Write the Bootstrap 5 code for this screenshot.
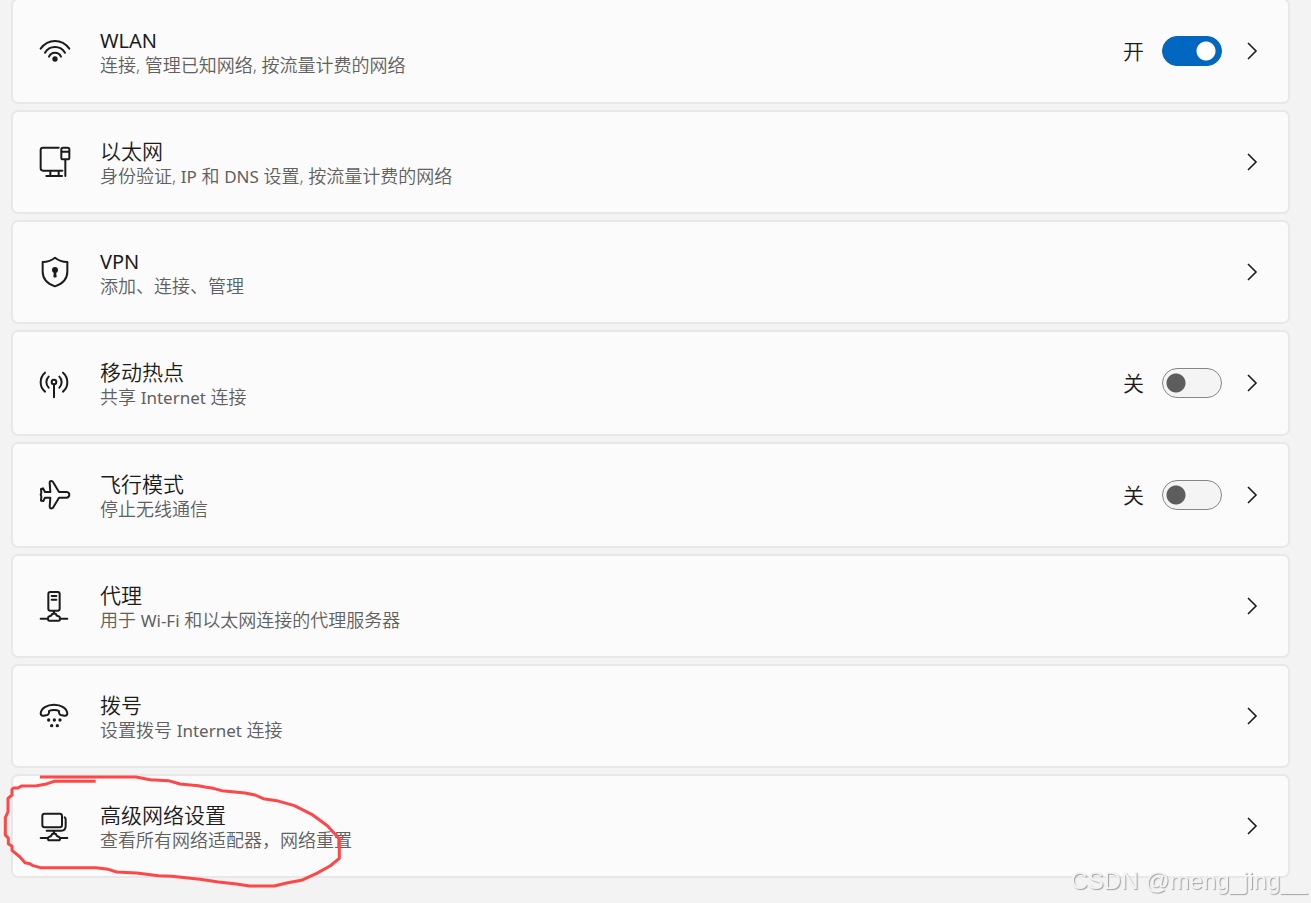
<!DOCTYPE html>
<html lang="zh-CN">
<head>
<meta charset="utf-8">
<meta name="viewport" content="width=device-width, initial-scale=1">
<title>网络和 Internet</title>
<link href="https://cdn.jsdelivr.net/npm/bootstrap@5.3.0/dist/css/bootstrap.min.css" rel="stylesheet">
<style>
  body { background: #f3f3f3; color: #1b1b1b; font-family: "Noto Sans", "Noto Sans CJK SC", sans-serif; font-weight: 350; }
  .settings-list { gap: 6px; margin-top: -2px; padding: 0 21px 24px 11px; }
  .setting { min-height: 104px; padding: 0 30px 0 17px; background: #fbfbfb; border: 2px solid #e8e8e8; border-radius: 7px; }
  .setting.has-switch { min-height: 106px; }
  .glyph { width: 50px; height: 50px; margin-right: 20px; fill: none; stroke: #1b1b1b; stroke-width: 6; stroke-linecap: round; stroke-linejoin: round; }
  .glyph .solid { fill: #1b1b1b; stroke: none; }
  .setting-text { padding-top: 4px; }
  .setting-title { font-size: 21px; line-height: 25px; color: #1b1b1b; }
  .setting-note { font-size: 18px; line-height: 25px; color: #606060; }
  .setting-title span { font-size: 20px; font-weight: 400; }
  .setting-note span { font-size: 17px; font-weight: 400; }
  .switch-group { gap: 18px; z-index: 2; margin-right: 25px; }
  .switch-group label { font-size: 21px; line-height: 30px; }
  .switch-group .form-check-input { width: 60px; height: 30px; margin: 0; border: 1px solid #868686; background-color: #f4f4f4;
    background-image: radial-gradient(circle at 13px 14px, #5d5d5d 9px, transparent 10px); background-size: 100% 100%; background-position: center; }
  .switch-group .form-check-input:checked { border-color: #0067c0; background-color: #0067c0;
    background-image: radial-gradient(circle at 43px 14px, #fff 9px, transparent 10px); background-position: center; }
  .chevron { width: 11px; height: 18px; fill: none; stroke: #1b1b1b; stroke-width: 1.6; }
  .marker { left: -13px; top: -11px; width: 370px; height: 138px; fill: none; stroke: #ff4747; stroke-width: 9; stroke-linecap: butt; stroke-linejoin: round; pointer-events: none; z-index: 3; }
  .watermark { right: 4px; bottom: 6px; font: 24px/32px "Liberation Sans", sans-serif; color: #f4f4f4; text-shadow: 1px 1px 1px #a0a0a0; z-index: 4; }
</style>
</head>
<body>
<main class="settings-list d-flex flex-column">
  <section class="setting has-switch position-relative d-flex align-items-center">
    <svg class="glyph flex-shrink-0" viewBox="0 -13 150 150" aria-hidden="true"><path d="M32 55Q49 32 75 32T118 55M45 67Q55 50 75 50T105 67M57 79Q62 67 75 67T93 79"/><circle class="solid" cx="75" cy="86" r="8"/></svg>
    <div class="setting-text flex-grow-1"><a href="#wlan" class="setting-title d-block text-decoration-none stretched-link"><span lang="en">WLAN</span></a><div class="setting-note">连接, 管理已知网络, 按流量计费的网络</div></div>
    <div class="switch-group form-switch position-relative d-flex align-items-center p-0"><label for="wlan-switch">开</label><input class="form-check-input" type="checkbox" role="switch" id="wlan-switch" checked></div>
    <svg class="chevron" viewBox="0 0 11 18" aria-hidden="true"><path d="M1 1l8 8-8 8"/></svg>
  </section>
  <section class="setting position-relative d-flex align-items-center">
    <svg class="glyph flex-shrink-0" viewBox="0 0 150 150" aria-hidden="true"><path d="M86 32H39Q32 32 32 39V94Q32 101 39 101H97M61 102V116M86 102V116M49 117H96M106 68V117"/><rect x="94" y="32" width="24" height="35" rx="5"/><path d="M95 44H117"/></svg>
    <div class="setting-text flex-grow-1"><a href="#ethernet" class="setting-title d-block text-decoration-none stretched-link">以太网</a><div class="setting-note">身份验证, <span lang="en">IP</span> 和 <span lang="en">DNS</span> 设置, 按流量计费的网络</div></div>
    <svg class="chevron" viewBox="0 0 11 18" aria-hidden="true"><path d="M1 1l8 8-8 8"/></svg>
  </section>
  <section class="setting position-relative d-flex align-items-center">
    <svg class="glyph flex-shrink-0" viewBox="0 0 150 150" aria-hidden="true"><path d="M75 32Q90 44 112 45V74Q112 105 75 118Q38 105 38 74V45Q60 44 75 32Z"/><circle class="solid" cx="75" cy="69" r="9"/><path class="solid" d="M72 70H78L80 90Q75 93 70 90Z"/></svg>
    <div class="setting-text flex-grow-1"><a href="#vpn" class="setting-title d-block text-decoration-none stretched-link"><span lang="en">VPN</span></a><div class="setting-note">添加、连接、管理</div></div>
    <svg class="chevron" viewBox="0 0 11 18" aria-hidden="true"><path d="M1 1l8 8-8 8"/></svg>
  </section>
  <section class="setting has-switch position-relative d-flex align-items-center">
    <svg class="glyph flex-shrink-0" viewBox="0 0 150 150" aria-hidden="true"><path d="M45 44Q32 55 32 73T45 101M99 44Q112 55 112 73T99 101M56 56Q49 63 49 72T56 89M88 56Q95 63 95 72T88 89M72 80V118"/><circle cx="72" cy="72" r="7"/></svg>
    <div class="setting-text flex-grow-1"><a href="#hotspot" class="setting-title d-block text-decoration-none stretched-link">移动热点</a><div class="setting-note">共享 <span lang="en">Internet</span> 连接</div></div>
    <div class="switch-group form-switch position-relative d-flex align-items-center p-0"><label for="hotspot-switch">关</label><input class="form-check-input" type="checkbox" role="switch" id="hotspot-switch"></div>
    <svg class="chevron" viewBox="0 0 11 18" aria-hidden="true"><path d="M1 1l8 8-8 8"/></svg>
  </section>
  <section class="setting has-switch position-relative d-flex align-items-center">
    <svg class="glyph flex-shrink-0" viewBox="0 0 150 150" aria-hidden="true"><path d="M45 66H61L59 38Q59 32 65 33L69 36L87 66H110Q118 67 118 74T110 83H87L69 113Q60 119 59 110L61 83H45L40 93L33 92L34 79L32 74L34 69L33 57L39 55Z"/></svg>
    <div class="setting-text flex-grow-1"><a href="#airplane" class="setting-title d-block text-decoration-none stretched-link">飞行模式</a><div class="setting-note">停止无线通信</div></div>
    <div class="switch-group form-switch position-relative d-flex align-items-center p-0"><label for="airplane-switch">关</label><input class="form-check-input" type="checkbox" role="switch" id="airplane-switch"></div>
    <svg class="chevron" viewBox="0 0 11 18" aria-hidden="true"><path d="M1 1l8 8-8 8"/></svg>
  </section>
  <section class="setting position-relative d-flex align-items-center">
    <svg class="glyph flex-shrink-0" viewBox="0 2 150 150" aria-hidden="true"><rect x="55" y="35" width="34" height="56" rx="6"/><path d="M65 47H79M65 58H79M72 92V99M32 115H54M90 115H112M58 108Q64 108 67 100H77Q80 108 86 108Q90 109 90 115T86 121H58Q54 121 54 115T58 108Z"/></svg>
    <div class="setting-text flex-grow-1"><a href="#proxy" class="setting-title d-block text-decoration-none stretched-link">代理</a><div class="setting-note">用于 <span lang="en">Wi-Fi</span> 和以太网连接的代理服务器</div></div>
    <svg class="chevron" viewBox="0 0 11 18" aria-hidden="true"><path d="M1 1l8 8-8 8"/></svg>
  </section>
  <section class="setting position-relative d-flex align-items-center">
    <svg class="glyph flex-shrink-0" viewBox="0 3 150 150" aria-hidden="true"><path d="M32 71C33 54 51 44 72 44S111 54 112 71Q111 78 103 77L92 75Q88 74 87 68V63Q82 60 72 60T57 63V68Q56 74 52 75L41 77Q33 78 32 71Z"/><g class="solid"><circle cx="56" cy="90" r="5"/><circle cx="73" cy="90" r="5"/><circle cx="90" cy="90" r="5"/><circle cx="65" cy="107" r="5"/><circle cx="82" cy="107" r="5"/></g></svg>
    <div class="setting-text flex-grow-1"><a href="#dialup" class="setting-title d-block text-decoration-none stretched-link">拨号</a><div class="setting-note">设置拨号 <span lang="en">Internet</span> 连接</div></div>
    <svg class="chevron" viewBox="0 0 11 18" aria-hidden="true"><path d="M1 1l8 8-8 8"/></svg>
  </section>
  <section class="setting position-relative d-flex align-items-center">
    <svg class="glyph flex-shrink-0" viewBox="0 0 150 150" aria-hidden="true"><rect x="37" y="38" width="59" height="41" rx="7"/><path d="M104 49Q107 51 107 55V75Q107 89 94 89H50M72 90V98M32 111H54M90 111H112M58 107Q64 107 67 98H77Q80 107 86 107Q90 108 90 113T86 118H58Q54 118 54 113T58 107Z"/></svg>
    <div class="setting-text flex-grow-1"><a href="#advanced" class="setting-title d-block text-decoration-none stretched-link">高级网络设置</a><div class="setting-note">查看所有网络适配器，网络重置</div></div>
    <svg class="chevron" viewBox="0 0 11 18" aria-hidden="true"><path d="M1 1l8 8-8 8"/></svg>
    <svg class="marker position-absolute" viewBox="0 0 1110 414" aria-hidden="true"><path d="M287 49H162L135 58L110 62L64 63L54 69H41L36 73V90L24 100V140L16 158V210L25 220V236L36 244V256L60 276L75 293L90 296L99 302L121 308H288L325 313L350 321L410 324L475 332L515 334L600 343L655 351L710 357L748 363H823L860 354L904 346L950 325L990 303L1018 280V222L1004 206L982 182L935 148L883 122L830 107L790 101L765 90L735 84L665 77L640 70L615 66L595 62L540 57L505 47L450 44L408 36H120"/></svg>
  </section>
</main>
<div class="watermark position-fixed">CSDN @meng_jing__</div>
<script src="https://cdn.jsdelivr.net/npm/bootstrap@5.3.0/dist/js/bootstrap.bundle.min.js"></script>
</body>
</html>
